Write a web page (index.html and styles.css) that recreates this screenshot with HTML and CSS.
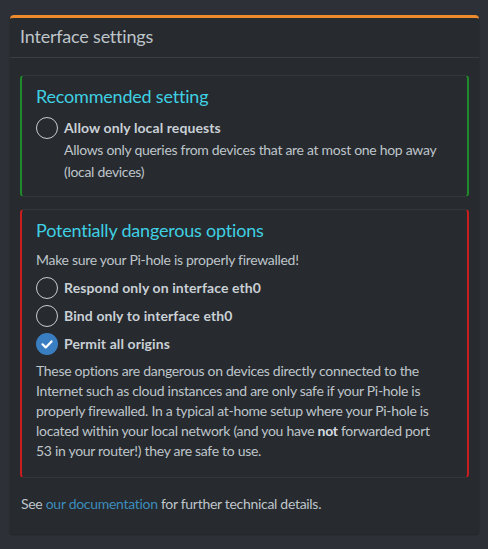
FILE: index.html
```html
<!DOCTYPE html>
<html lang="en">
<head>
  <meta charset="UTF-8">
  <meta name="viewport" content="width=device-width, initial-scale=1.0">
  <title>Interface settings</title>
  <link rel="stylesheet" href="styles.css">
</head>
<body>
  <div class="box">
    <div class="box-header">
      <h3 class="box-title">Interface settings</h3>
    </div>
    <div class="box-body">
      <div class="callout callout-success">
        <h4>Recommended setting</h4>
        <label class="radio">
          <span class="radio-mark"></span>
          <strong>Allow only local requests</strong>
        </label>
        <p class="radio-help">Allows only queries from devices that are at most one hop away (local devices)</p>
      </div>

      <div class="callout callout-danger">
        <h4>Potentially dangerous options</h4>
        <p class="warn">Make sure your Pi-hole is properly firewalled!</p>
        <label class="radio">
          <span class="radio-mark"></span>
          <strong>Respond only on interface eth0</strong>
        </label>
        <label class="radio">
          <span class="radio-mark"></span>
          <strong>Bind only to interface eth0</strong>
        </label>
        <label class="radio">
          <span class="radio-mark checked">
            <svg viewBox="0 0 22 22" width="22" height="22"><path d="M6.5 11.3l3.2 3.1 5.8-6" fill="none" stroke="#fff" stroke-width="2.2" stroke-linecap="round" stroke-linejoin="round"/></svg>
          </span>
          <strong>Permit all origins</strong>
        </label>
        <p class="note">These options are dangerous on devices directly connected to the Internet such as cloud instances and are only safe if your Pi-hole is properly firewalled. In a typical at-home setup where your Pi-hole is located within your local network (and you have <strong>not</strong> forwarded port 53 in your router!) they are safe to use.</p>
      </div>

      <p class="footer-note">See <a href="#">our documentation</a> for further technical details.</p>
    </div>
  </div>
</body>
</html>
```

FILE: styles.css
```css
/* General Styles */
body {
  margin: 0;
  padding: 15px 9px 16px 10px;
  background-color: #2d3137;
  font-family: 'Lato', 'Liberation Sans', sans-serif;
  font-size: 14px;
  line-height: 20px;
  letter-spacing: -0.3px;
  color: #bec5cb;
}

.box {
  background-color: #272a2e;
  border-top: 3px solid #ec8a2d;
  border-radius: 4px;
  box-shadow: 0 1px 2px rgba(0, 0, 0, 0.3);
}

.box-header {
  padding: 8px 10px 11px;
  border-bottom: 1px solid #3a3e44;
}

.box-title {
  margin: 0;
  font-size: 18px;
  font-weight: normal;
  line-height: 20px;
  letter-spacing: -0.2px;
  color: #bec5cb;
}

.box-body {
  padding: 17px 10px 20px;
}

/* Callouts */
.callout {
  padding: 10px 20px 13px 14px;
  border-radius: 4px;
  border: 1px solid #33373c;
  border-left: 2px solid;
  border-right: 2px solid;
  background-color: #272a2e;
}

.callout-success {
  border-left-color: #1f8a2c;
  border-right-color: #1f8a2c;
  margin-bottom: 12px;
}

.callout-success .radio {
  margin-bottom: 0;
}

.callout-danger {
  border-left-color: #c81e1e;
  border-right-color: #c81e1e;
  padding-bottom: 16px;
  margin-bottom: 16px;
}

.callout h4 {
  margin: 0 0 11px;
  font-size: 18px;
  font-weight: normal;
  line-height: 20px;
  letter-spacing: -0.2px;
  color: #3fd0e3;
}

.callout-danger h4 {
  margin-bottom: 10px;
}

.radio {
  display: flex;
  align-items: center;
  height: 22px;
  margin-bottom: 6px;
}

.radio strong {
  color: #c9d0d6;
  font-weight: bold;
  letter-spacing: 0.1px;
}

.radio-mark {
  width: 22px;
  height: 22px;
  box-sizing: border-box;
  border: 1.5px solid #c9ced3;
  border-radius: 50%;
  margin-right: 6px;
  flex-shrink: 0;
}

.radio-mark.checked {
  border: none;
  background-color: #3a7ec2;
}

.radio-mark svg {
  display: block;
}

.radio-help {
  margin: 0;
  padding-left: 28px;
  line-height: 22px;
}

.warn {
  margin: 0 0 7px;
}

.note {
  margin: 0;
}

.note strong {
  color: #d6dce1;
}

.footer-note {
  margin: 0 0 0 1px;
}

.footer-note a {
  color: #3c8dbc;
  text-decoration: none;
}
```
